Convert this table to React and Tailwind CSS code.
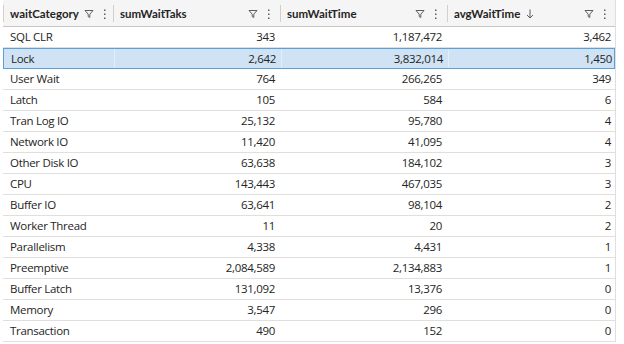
import React from 'react';

const columns = [
  { key: 'waitCategory', label: 'waitCategory', align: 'left' },
  { key: 'sumWaitTaks', label: 'sumWaitTaks', align: 'right' },
  { key: 'sumWaitTime', label: 'sumWaitTime', align: 'right' },
  { key: 'avgWaitTime', label: 'avgWaitTime', align: 'right', sorted: true },
];

const rows = [
  ['SQL CLR', '343', '1,187,472', '3,462'],
  ['Lock', '2,642', '3,832,014', '1,450'],
  ['User Wait', '764', '266,265', '349'],
  ['Latch', '105', '584', '6'],
  ['Tran Log IO', '25,132', '95,780', '4'],
  ['Network IO', '11,420', '41,095', '4'],
  ['Other Disk IO', '63,638', '184,102', '3'],
  ['CPU', '143,443', '467,035', '3'],
  ['Buffer IO', '63,641', '98,104', '2'],
  ['Worker Thread', '11', '20', '2'],
  ['Parallelism', '4,338', '4,431', '1'],
  ['Preemptive', '2,084,589', '2,134,883', '1'],
  ['Buffer Latch', '131,092', '13,376', '0'],
  ['Memory', '3,547', '296', '0'],
  ['Transaction', '490', '152', '0'],
];

const FilterIcon = () => (
  <svg width="10" height="10" viewBox="0 0 10 10" fill="none" stroke="#605e5c" strokeWidth="1">
    <path d="M1 1.5h8L5.8 5.2v3.3L4.2 7.6V5.2z" strokeLinejoin="round" />
  </svg>
);

const MoreIcon = () => (
  <svg width="4" height="12" viewBox="0 0 4 12" fill="#605e5c">
    <rect x="1" y="1.5" width="1.5" height="1.5" />
    <rect x="1" y="5.5" width="1.5" height="1.5" />
    <rect x="1" y="9.5" width="1.5" height="1.5" />
  </svg>
);

const SortDown = () => (
  <svg width="8" height="10" viewBox="0 0 8 10" fill="none" stroke="#605e5c" strokeWidth="1">
    <path d="M4 0.5v8.5M1 6l3 3 3-3" />
  </svg>
);

const grid = 'grid grid-cols-[110px_167px_167px_169px]';

export default function App() {
  return (
    <div
      className="w-[624px] h-[344px] bg-white overflow-hidden pl-[3px] text-[#252423]"
      style={{ fontFamily: '"Open Sans", "Noto Sans", sans-serif' }}
    >
      <div className="w-[613px] border-r border-[#e1dfdd]">
        <div className={`${grid} h-[27px] bg-[#f5f5f5] border-b border-[#c8c6c4]`}>
          {columns.map((col) => (
            <div key={col.key} className="flex items-center border-l border-[#d2d0ce] my-[5px] pl-[6px] pr-[9px]">
              <span
                className="text-[11.5px] font-bold text-[#252423] whitespace-nowrap"
                style={{ fontFamily: 'Lato, "Open Sans", sans-serif' }}
              >
                {col.label}
              </span>
              {col.sorted && (
                <span className="ml-[6px] flex items-center"><SortDown /></span>
              )}
              <span className="ml-auto pl-[5px] flex items-center gap-[9px] shrink-0">
                <FilterIcon />
                <MoreIcon />
              </span>
            </div>
          ))}
        </div>
        {rows.map((row, r) => {
          const selected = r === 1;
          return (
            <div
              key={r}
              className={`${grid} h-[21px] text-[11.5px] tracking-[-0.3px] ${
                selected
                  ? 'bg-[#cfe3f5] border border-[#5aa0db]'
                  : 'border-b border-[#e1dfdd]'
              }`}
            >
              {row.map((cell, c) => (
                <div
                  key={c}
                  className={`flex items-center ${
                    c === 0 ? 'justify-start pl-[7px]' : 'justify-end pr-[5px]'
                  } ${selected && c > 0 ? 'border-l border-[#e4eef8]' : ''}`}
                >
                  {cell}
                </div>
              ))}
            </div>
          );
        })}
      </div>
    </div>
  );
}
